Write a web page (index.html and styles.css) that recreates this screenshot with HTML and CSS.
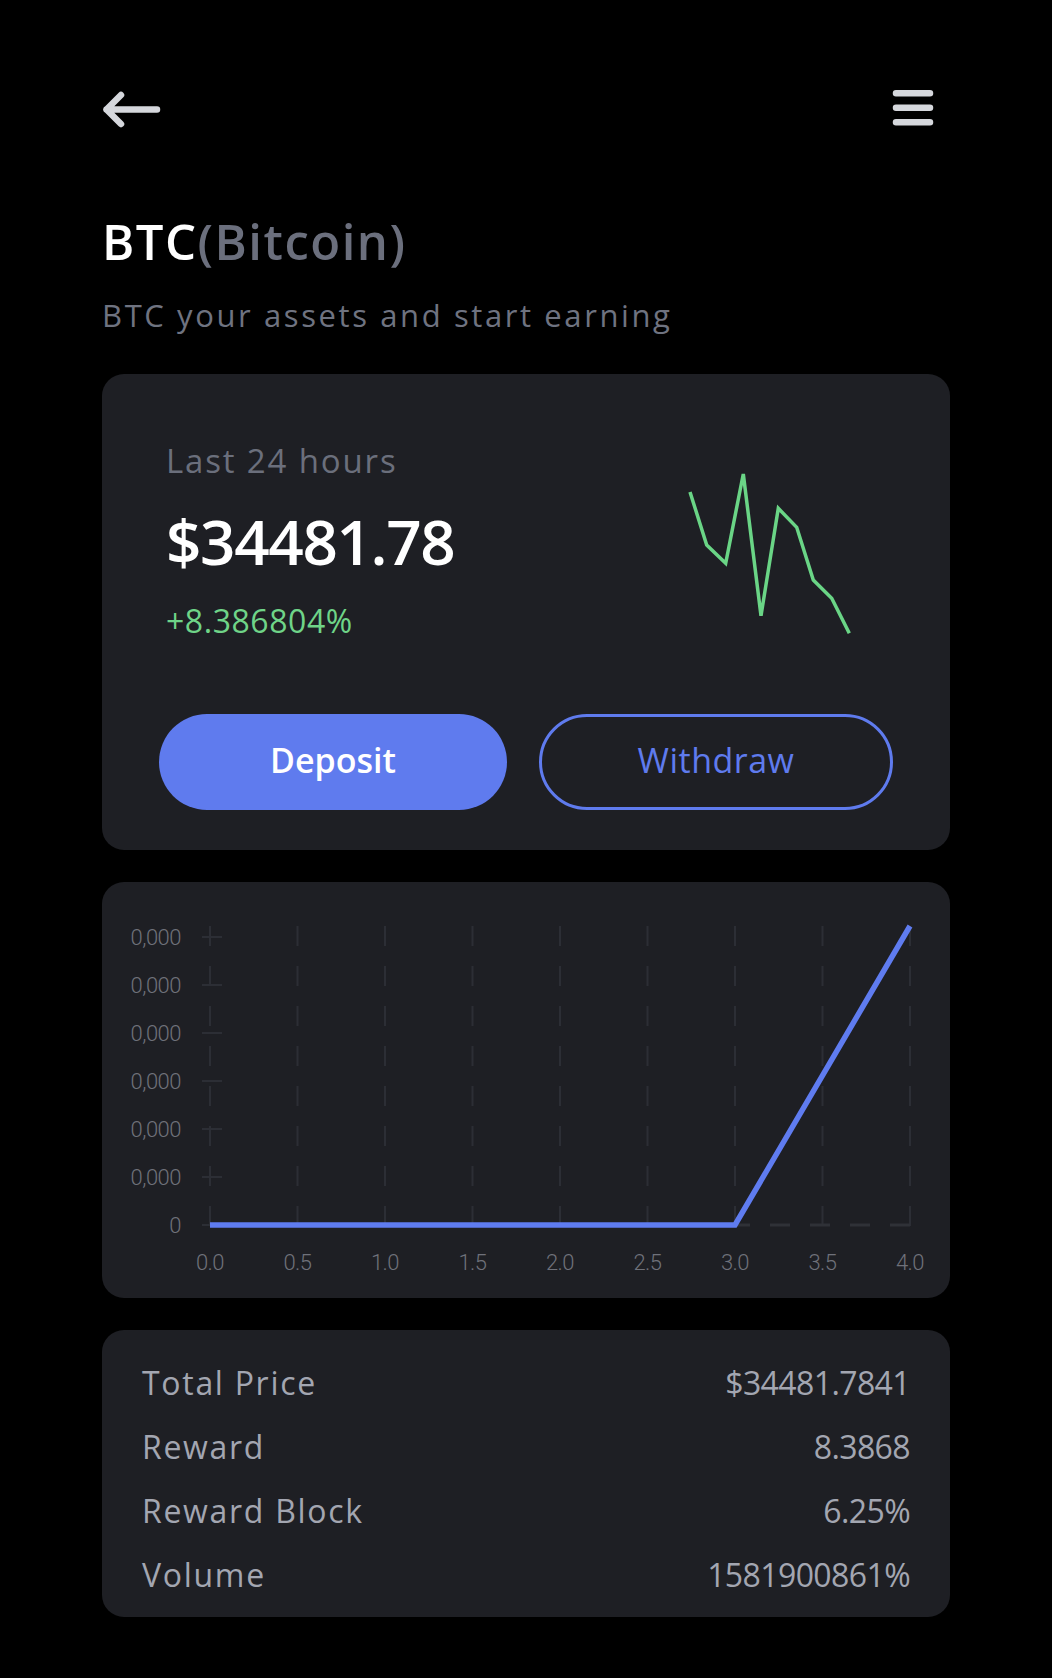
FILE: index.html
```html
<!DOCTYPE html>
<html lang="en">
<head>
<meta charset="utf-8">
<title>BTC (Bitcoin)</title>
<link rel="stylesheet" href="styles.css">
</head>
<body>
<div class="page">
  <header class="topbar">
    <button class="icon-btn" aria-label="Back">
      <svg class="icon" viewBox="0 0 60 60" width="60" height="60">
        <path d="M55 29.5H4.5M19 15L4.5 29.5L19 44" />
      </svg>
    </button>
    <button class="icon-btn" aria-label="Menu">
      <svg class="icon" viewBox="0 0 60 60" width="60" height="60">
        <path d="M6 13.3H40M6 27.8H40M6 42.3H40" />
      </svg>
    </button>
  </header>

  <h1 class="title">BTC<span class="title-sub">(Bitcoin)</span></h1>
  <p class="subtitle">BTC your assets and start earning</p>

  <section class="card summary">
    <div class="summary-top">
      <div class="stats">
        <div class="stats-label">Last 24 hours</div>
        <div class="stats-price">$34481.78</div>
        <div class="stats-change">+8.386804%</div>
      </div>
      <svg class="spark" viewBox="0 0 180 180" width="180" height="180">
        <polyline points="10,28 26.7,81 45.7,99.3 63.3,10 81,151.7 98.3,44.3 116.7,63.3 133.3,116 151.7,134.3 169.3,169.3" />
      </svg>
    </div>
    <div class="actions">
      <button class="btn btn-primary">Deposit</button>
      <button class="btn btn-outline">Withdraw</button>
    </div>
  </section>

  <section class="card chart-card">
    <svg class="chart" viewBox="0 0 848 416" width="848" height="416">
      <g class="grid-v">
        <line x1="108" y1="44" x2="108" y2="344" />
        <line x1="195.5" y1="44" x2="195.5" y2="344" />
        <line x1="283" y1="44" x2="283" y2="344" />
        <line x1="370.5" y1="44" x2="370.5" y2="344" />
        <line x1="458" y1="44" x2="458" y2="344" />
        <line x1="545.5" y1="44" x2="545.5" y2="344" />
        <line x1="633" y1="44" x2="633" y2="344" />
        <line x1="720.5" y1="44" x2="720.5" y2="344" />
        <line x1="808" y1="44" x2="808" y2="344" />
      </g>
      <path class="grid-ticks" d="M100 55H120M100 103H120M100 151H120M100 199H120M100 247H120M100 295H120M100 343H120" />
      <line class="grid-base" x1="108" y1="343" x2="808" y2="343" />
      <polyline class="chart-line" points="108,343 633,343 808,44" />
      <g class="axis-y">
        <text x="79" y="62.5">0,000</text>
        <text x="79" y="110.5">0,000</text>
        <text x="79" y="158.5">0,000</text>
        <text x="79" y="206.5">0,000</text>
        <text x="79" y="254.5">0,000</text>
        <text x="79" y="302.5">0,000</text>
        <text x="79" y="350.5">0</text>
      </g>
      <g class="axis-x">
        <text x="108" y="387.5">0.0</text>
        <text x="195.5" y="387.5">0.5</text>
        <text x="283" y="387.5">1.0</text>
        <text x="370.5" y="387.5">1.5</text>
        <text x="458" y="387.5">2.0</text>
        <text x="545.5" y="387.5">2.5</text>
        <text x="633" y="387.5">3.0</text>
        <text x="720.5" y="387.5">3.5</text>
        <text x="808" y="387.5">4.0</text>
      </g>
    </svg>
  </section>

  <section class="card details">
    <div class="row"><span class="row-label">Total Price</span><span class="row-value">$34481.7841</span></div>
    <div class="row"><span class="row-label">Reward</span><span class="row-value">8.3868</span></div>
    <div class="row"><span class="row-label">Reward Block</span><span class="row-value">6.25%</span></div>
    <div class="row"><span class="row-label">Volume</span><span class="row-value">1581900861%</span></div>
  </section>
</div>
</body>
</html>
```

FILE: styles.css
```css
* {
  box-sizing: border-box;
}

html,
body {
  margin: 0;
  background: #000000;
}

body {
  font-family: "Open Sans", "Noto Sans", sans-serif;
  color: #ffffff;
}

.page {
  width: 1052px;
  padding: 80px 102px 0;
}

.topbar {
  display: flex;
  justify-content: space-between;
  align-items: center;
  height: 60px;
}

.icon-btn {
  display: block;
  width: 60px;
  height: 60px;
  padding: 0;
  border: none;
  background: none;
}

.icon {
  display: block;
  fill: none;
  stroke: #d5d7dc;
  stroke-width: 6.5;
  stroke-linecap: round;
  stroke-linejoin: round;
}

.title {
  margin: 73px 0 0;
  font-size: 49px;
  line-height: 56px;
  font-weight: 600;
  letter-spacing: 1.5px;
  color: #ffffff;
}

.title-sub {
  color: #6b6f7d;
}

.subtitle {
  margin: 26px 0 0;
  font-size: 31px;
  line-height: 40px;
  font-weight: 400;
  letter-spacing: 2.6px;
  color: #6f7380;
}

.card {
  background: #1e1f24;
  border-radius: 22px;
}

.card + .card {
  margin-top: 32px;
}

.summary {
  margin-top: 39px;
  padding: 40px 57px;
}

.summary-top {
  display: flex;
  justify-content: space-between;
  align-items: flex-start;
}

.stats {
  padding-top: 27px;
  margin-left: 7px;
}

.stats-label {
  font-size: 33px;
  line-height: 40px;
  font-weight: 400;
  letter-spacing: 1.85px;
  color: #6b6f7c;
}

.stats-price {
  margin-top: 24px;
  font-size: 62px;
  line-height: 72px;
  font-weight: 600;
  letter-spacing: -1.35px;
  color: #ffffff;
}

.stats-change {
  margin-top: 24px;
  font-size: 32px;
  line-height: 40px;
  font-weight: 400;
  letter-spacing: 0.55px;
  color: #6fd488;
}

.spark {
  display: block;
  margin-top: 50px;
  margin-right: 33px;
  fill: none;
  stroke: #6ad586;
  stroke-width: 3.5;
  stroke-linejoin: miter;
}

.actions {
  display: flex;
  gap: 32px;
  margin-top: 70px;
}

.btn {
  flex: 1;
  height: 96px;
  padding: 0 0 4px;
  border-radius: 48px;
  font-family: inherit;
  font-size: 34px;
  font-weight: 600;
  cursor: pointer;
}

.btn-primary {
  background: #5f7bee;
  border: none;
  color: #ffffff;
}

.btn-outline {
  background: transparent;
  border: 3.5px solid #5f7bee;
  color: #5f7bee;
  font-weight: 400;
  letter-spacing: 0.5px;
}

.chart-card {
  height: 416px;
}

.chart {
  display: block;
}

.grid-v line {
  stroke: #2c2e35;
  stroke-width: 2;
  stroke-dasharray: 20 20;
}

.grid-ticks {
  stroke: #2c2e35;
  stroke-width: 2;
  fill: none;
}

.grid-base {
  stroke: #2f3137;
  stroke-width: 3;
  stroke-dasharray: 20 20;
}

.chart-line {
  fill: none;
  stroke: #5f7cf0;
  stroke-width: 5.5;
  stroke-linejoin: miter;
}

.axis-y text,
.axis-x text {
  font-family: Roboto, "Open Sans", sans-serif;
  font-size: 22px;
  font-weight: 300;
  letter-spacing: -0.5px;
  fill: #6f717a;
}

.axis-y text {
  text-anchor: end;
}

.axis-x text {
  text-anchor: middle;
}

.details {
  padding: 21px 40px 10px;
}

.row {
  display: flex;
  justify-content: space-between;
  align-items: baseline;
  font-size: 32px;
  line-height: 64px;
  font-weight: 400;
  color: #a3a6b1;
}

.row-label {
  letter-spacing: 1.7px;
}

.row-value {
  letter-spacing: -0.6px;
}
```
